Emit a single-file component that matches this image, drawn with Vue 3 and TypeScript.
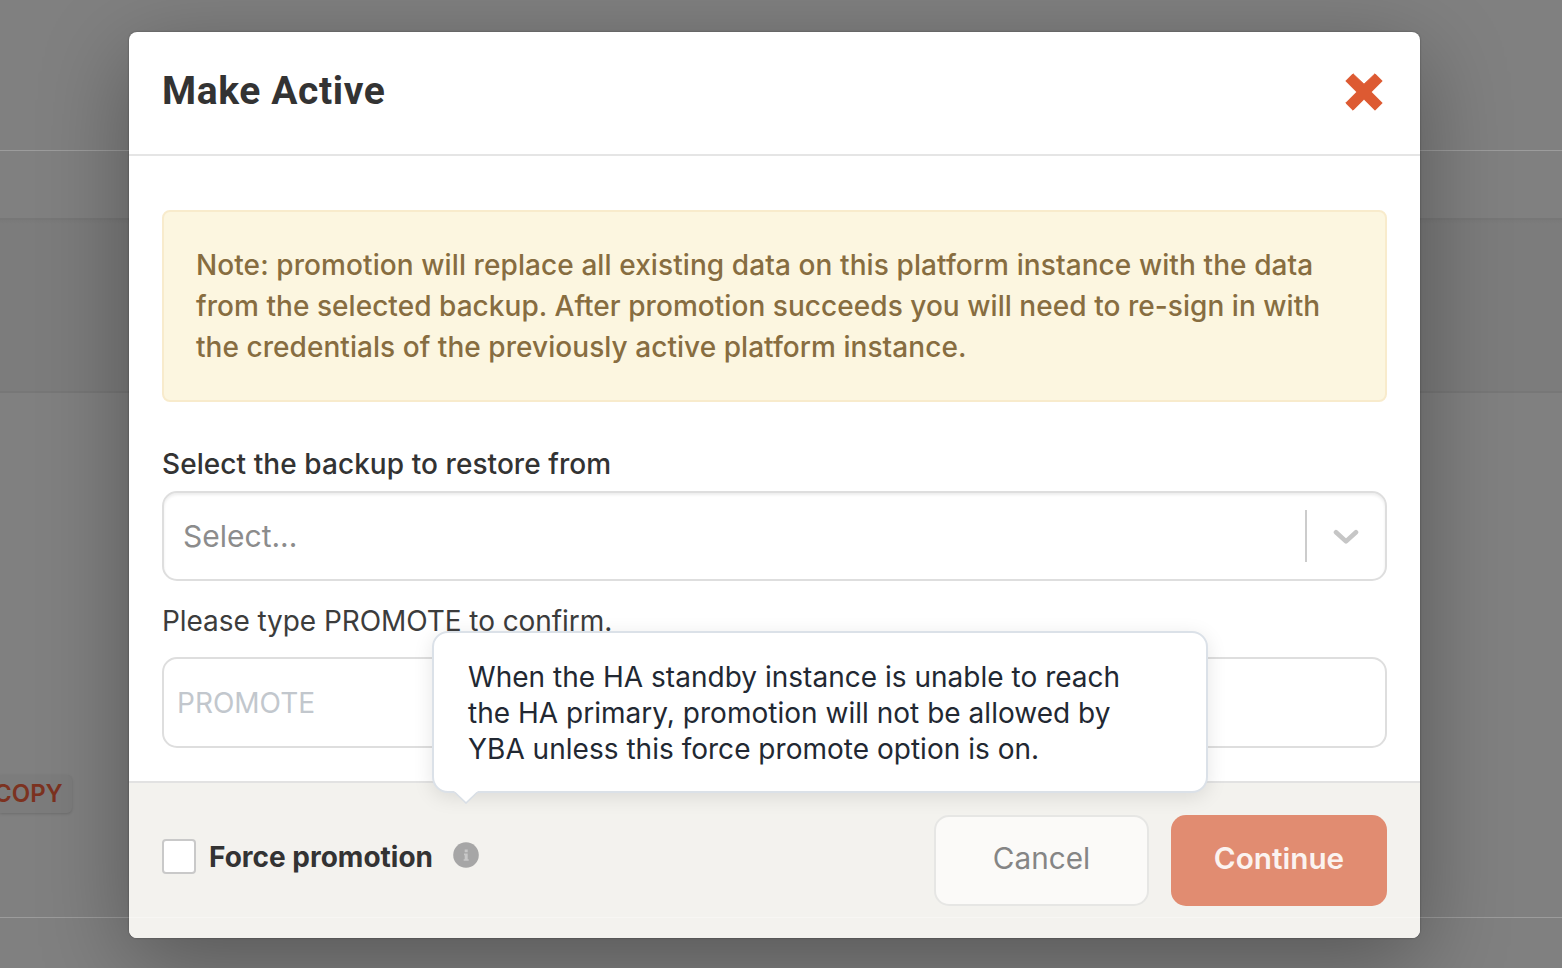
<script setup lang="ts">
import { ref } from 'vue'

const noteLines: string[] = [
  'Note: promotion will replace all existing data on this platform instance with the data',
  'from the selected backup. After promotion succeeds you will need to re-sign in with',
  'the credentials of the previously active platform instance.',
]

const tooltipLines: string[] = [
  'When the HA standby instance is unable to reach',
  'the HA primary, promotion will not be allowed by',
  'YBA unless this force promote option is on.',
]

const confirmText = ref('')
const forcePromotion = ref(false)
</script>

<template>
  <div class="page">
    <div class="backdrop">
      <div class="strip strip-top"></div>
      <div class="strip strip-tabs"></div>
      <div class="strip strip-panel"></div>
      <div class="strip strip-body">
        <span class="copy">COPY</span>
      </div>
      <div class="strip strip-bottom"></div>
    </div>

    <section class="modal" role="dialog" aria-label="Make Active">
      <header class="modal-header">
        <h4 class="title">Make Active</h4>
        <button class="close" type="button" aria-label="Close">
          <svg viewBox="0 0 38 38" width="38" height="38">
            <path d="M8 .8 19 11.2 30 .8 37.2 8 26.2 19 37.2 30 30 37.2 19 26.2 8 37.2 .8 30 11.8 19 .8 8Z" fill="#dd5a32" stroke="#dd5a32" stroke-width="1" stroke-linejoin="round" />
          </svg>
        </button>
      </header>

      <div class="modal-body">
        <div class="alert">
          <div v-for="line in noteLines" :key="line" class="alert-line"><span>{{ line }}</span></div>
        </div>

        <div class="label"><span>Select the backup to restore from</span></div>
        <div class="select">
          <span class="placeholder">Select...</span>
          <span class="separator"></span>
          <svg class="chevron" viewBox="0 0 26 16" width="26" height="16">
            <path d="M3 3.2 13 12.4 23 3.2" fill="none" stroke="#c6c6c6" stroke-width="4.6" stroke-linecap="round" stroke-linejoin="round" />
          </svg>
        </div>

        <div class="confirm"><span>Please type PROMOTE to confirm.</span></div>
        <input v-model="confirmText" class="input" type="text" placeholder="PROMOTE" />
      </div>

      <footer class="modal-footer">
        <label class="force">
          <input v-model="forcePromotion" class="box" type="checkbox" />
          <span class="force-text">Force promotion</span>
        </label>
        <span class="info">
          <svg viewBox="0 0 26 26" width="26" height="26">
            <circle cx="13" cy="13" r="12.8" fill="#a6a6a6" />
            <path d="M11.7 7.6h3v2.6h-3zM11 11.6h3.7v5.6h1v1.6h-5v-1.6h1v-4h-.7z" fill="#c8c8c8" />
          </svg>
          <span class="tooltip" role="tooltip">
            <span v-for="line in tooltipLines" :key="line" class="tooltip-line"><span>{{ line }}</span></span>
            <svg class="arrow" viewBox="0 0 24 13" width="24" height="13">
              <path d="M0 0 12 11.4 24 0Z" fill="#fff" />
              <path d="M1 1.5 12 12 23 1.5" fill="none" stroke="#d9dfe6" stroke-width="1.6" />
            </svg>
          </span>
        </span>
        <div class="actions">
          <button class="btn cancel" type="button"><span>Cancel</span></button>
          <button class="btn continue" type="button"><span>Continue</span></button>
        </div>
      </footer>
    </section>
  </div>
</template>

<style>
html,
body {
  margin: 0;
  overflow: hidden;
}
</style>

<style scoped>
.page {
  position: relative;
  width: 1562px;
  height: 968px;
  overflow: hidden;
  box-sizing: border-box;
  padding: 32px 0 0 129px;
  font-family: Inter, "Liberation Sans", sans-serif;
  background: #808080;
}
.page *,
.page *::before,
.page *::after {
  box-sizing: border-box;
}
.page span {
  white-space: nowrap;
}
.backdrop {
  position: absolute;
  inset: 0;
  display: flex;
  flex-direction: column;
}
.strip-top {
  height: 151px;
  border-bottom: 1px solid #9c9c9c;
}
.strip-tabs {
  height: 67px;
}
.strip-panel {
  height: 175px;
  background: linear-gradient(#797979, #7c7c7c 4px);
  border-top: 2px solid #777;
  border-bottom: 2px solid #777;
}
.strip-body {
  height: 525px;
  padding-top: 382px;
  border-bottom: 1px solid #9c9c9c;
}
.strip-bottom {
  flex: 1;
}
.copy {
  display: block;
  width: 72px;
  height: 38px;
  text-indent: -6px;
  border-radius: 0 5px 5px 0;
  background: #7c7c7c;
  box-shadow: 0 1px 3px rgba(0, 0, 0, 0.16);
  color: #7c3220;
  font-size: 24px;
  line-height: 37px;
  font-weight: 600;
}
.modal {
  position: relative;
  width: 1291px;
  height: 906px;
  display: flex;
  flex-direction: column;
  border-radius: 8px;
  background: #fff;
  box-shadow: 0 0 2px rgba(0, 0, 0, 0.4), 0 24px 90px rgba(0, 0, 0, 0.33);
}
.modal-header {
  height: 124px;
  display: flex;
  justify-content: space-between;
  padding: 0 37px 0 33px;
  border-bottom: 2px solid #e5e5e5;
}
.title {
  margin: 35px 0 0;
  font-family: Roboto, sans-serif;
  font-size: 39px;
  line-height: 48px;
  font-weight: 700;
  letter-spacing: 0.6px;
  color: #333;
}
.close {
  width: 38px;
  height: 38px;
  margin-top: 41px;
  padding: 0;
  border: 0;
  background: none;
}
.close svg {
  display: block;
}
.modal-body {
  height: 625px;
  padding: 54px 33px 0;
}
.alert {
  height: 192px;
  padding: 33px 32px 0;
  border: 2px solid #f8ebcc;
  border-radius: 8px;
  background: #fcf6e0;
}
.alert-line {
  height: 41px;
  line-height: 41px;
  font-size: 28px;
  font-weight: 500;
  letter-spacing: 0.05px;
  color: #876d40;
}
.alert-line:first-child {
  letter-spacing: 0.09px;
}
.label {
  height: 36px;
  margin-top: 44px;
  font-size: 28px;
  line-height: 36px;
  font-weight: 500;
  letter-spacing: 0.07px;
  color: #333;
}
.select {
  height: 90px;
  margin-top: 9px;
  padding: 0 26px 0 19px;
  display: flex;
  align-items: center;
  border: 2px solid #dedede;
  border-radius: 15px;
  box-shadow: inset 0 2px 3px rgba(0, 0, 0, 0.075);
}
.placeholder {
  flex: 1;
  font-size: 30px;
  color: #8c8c8c;
}
.separator {
  width: 2px;
  height: 52px;
  margin-right: 26px;
  background: #ccc;
}
.chevron {
  display: block;
  margin-top: 2px;
}
.confirm {
  height: 36px;
  margin-top: 22px;
  font-size: 28px;
  line-height: 36px;
  letter-spacing: -0.07px;
  color: #3c3c3c;
}
.input {
  display: block;
  width: 100%;
  height: 91px;
  margin: 18px 0 0;
  padding: 1px 13px 0;
  border: 2px solid #dedede;
  border-radius: 15px;
  outline: 0;
  background: #fff;
  font: 400 28px Inter, sans-serif;
  color: #333;
}
.input::placeholder {
  color: #c2c7cd;
  opacity: 1;
}
.modal-footer {
  position: relative;
  flex: 1;
  display: flex;
  align-items: flex-start;
  padding: 0 33px;
  border-top: 2px solid #e2e2e2;
  border-radius: 0 0 8px 8px;
  background: #f3f2ee;
}
.modal-footer::after {
  content: "";
  position: absolute;
  left: 0;
  right: 0;
  bottom: 20px;
  height: 1px;
  background: #f7f6f3;
}
.force {
  display: flex;
  align-items: flex-start;
}
.box {
  appearance: none;
  width: 34px;
  height: 35px;
  margin: 56px 13px 0 0;
  border: 2px solid #c9c9c9;
  border-radius: 4px;
  background: #fff;
}
.force-text {
  margin-top: 56px;
  font-size: 28px;
  line-height: 36px;
  font-weight: 700;
  color: #333;
}
.info {
  position: relative;
  margin: 59px 0 0 20px;
}
.info > svg {
  display: block;
}
.tooltip {
  position: absolute;
  left: -21px;
  bottom: 75px;
  width: 776px;
  height: 162px;
  padding: 26px 0 0 34px;
  border: 2px solid #dbe1e8;
  border-radius: 16px;
  background: #fff;
  box-shadow: 0 4px 20px rgba(0, 0, 0, 0.1);
}
.tooltip-line {
  display: block;
  height: 36px;
  line-height: 36px;
  font-size: 28px;
  letter-spacing: 0.02px;
  color: #222832;
}
.arrow {
  position: absolute;
  left: 20px;
  bottom: -13px;
}
.actions {
  display: flex;
  gap: 22px;
  margin: 32px 0 0 auto;
}
.btn {
  height: 91px;
  padding: 0 0 5px;
  border-radius: 15px;
  font-family: Inter, sans-serif;
  font-size: 29.7px;
}
.cancel {
  width: 215px;
  border: 2px solid #e6e6e4;
  background: #fbfaf8;
  color: #858585;
}
.continue {
  width: 216px;
  border: 0;
  background: #e18c71;
  color: #fbf3f0;
  font-weight: 600;
}
</style>
